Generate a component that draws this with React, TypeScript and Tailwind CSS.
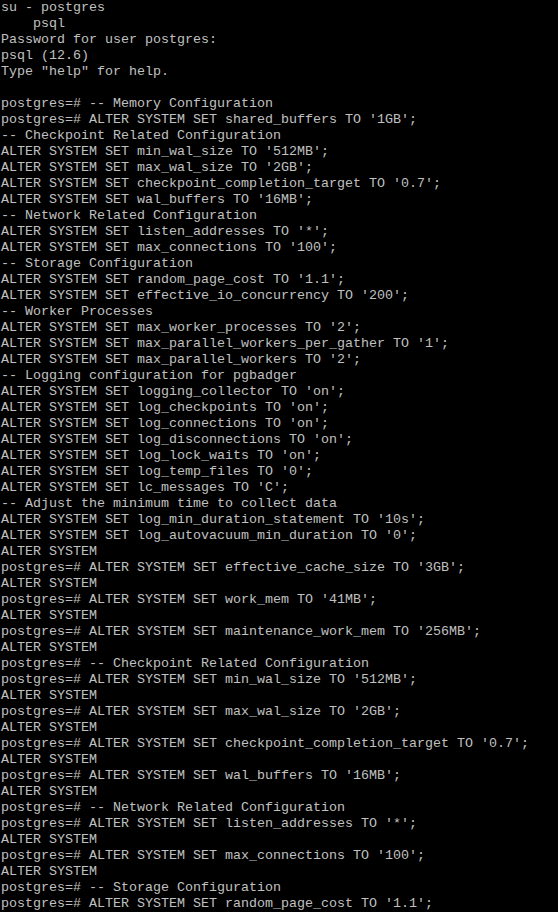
const lines = [
  "su - postgres",
  "    psql",
  "Password for user postgres:",
  "psql (12.6)",
  'Type "help" for help.',
  "",
  "postgres=# -- Memory Configuration",
  "postgres=# ALTER SYSTEM SET shared_buffers TO '1GB';",
  "-- Checkpoint Related Configuration",
  "ALTER SYSTEM SET min_wal_size TO '512MB';",
  "ALTER SYSTEM SET max_wal_size TO '2GB';",
  "ALTER SYSTEM SET checkpoint_completion_target TO '0.7';",
  "ALTER SYSTEM SET wal_buffers TO '16MB';",
  "-- Network Related Configuration",
  "ALTER SYSTEM SET listen_addresses TO '*';",
  "ALTER SYSTEM SET max_connections TO '100';",
  "-- Storage Configuration",
  "ALTER SYSTEM SET random_page_cost TO '1.1';",
  "ALTER SYSTEM SET effective_io_concurrency TO '200';",
  "-- Worker Processes",
  "ALTER SYSTEM SET max_worker_processes TO '2';",
  "ALTER SYSTEM SET max_parallel_workers_per_gather TO '1';",
  "ALTER SYSTEM SET max_parallel_workers TO '2';",
  "-- Logging configuration for pgbadger",
  "ALTER SYSTEM SET logging_collector TO 'on';",
  "ALTER SYSTEM SET log_checkpoints TO 'on';",
  "ALTER SYSTEM SET log_connections TO 'on';",
  "ALTER SYSTEM SET log_disconnections TO 'on';",
  "ALTER SYSTEM SET log_lock_waits TO 'on';",
  "ALTER SYSTEM SET log_temp_files TO '0';",
  "ALTER SYSTEM SET lc_messages TO 'C';",
  "-- Adjust the minimum time to collect data",
  "ALTER SYSTEM SET log_min_duration_statement TO '10s';",
  "ALTER SYSTEM SET log_autovacuum_min_duration TO '0';",
  "ALTER SYSTEM",
  "postgres=# ALTER SYSTEM SET effective_cache_size TO '3GB';",
  "ALTER SYSTEM",
  "postgres=# ALTER SYSTEM SET work_mem TO '41MB';",
  "ALTER SYSTEM",
  "postgres=# ALTER SYSTEM SET maintenance_work_mem TO '256MB';",
  "ALTER SYSTEM",
  "postgres=# -- Checkpoint Related Configuration",
  "postgres=# ALTER SYSTEM SET min_wal_size TO '512MB';",
  "ALTER SYSTEM",
  "postgres=# ALTER SYSTEM SET max_wal_size TO '2GB';",
  "ALTER SYSTEM",
  "postgres=# ALTER SYSTEM SET checkpoint_completion_target TO '0.7';",
  "ALTER SYSTEM",
  "postgres=# ALTER SYSTEM SET wal_buffers TO '16MB';",
  "ALTER SYSTEM",
  "postgres=# -- Network Related Configuration",
  "postgres=# ALTER SYSTEM SET listen_addresses TO '*';",
  "ALTER SYSTEM",
  "postgres=# ALTER SYSTEM SET max_connections TO '100';",
  "ALTER SYSTEM",
  "postgres=# -- Storage Configuration",
  "postgres=# ALTER SYSTEM SET random_page_cost TO '1.1';",
];

export default function App() {
  return (
    <div className="w-[558px] h-[912px] overflow-hidden bg-black">
      <div className="pl-[1px] font-['Liberation_Mono','Courier_New',monospace] text-[13.33px] leading-[16px] text-[#c0c0c0] whitespace-pre">
        {lines.map((l, i) => (
          <div key={i} className="h-[16px]">
            {l}
          </div>
        ))}
      </div>
    </div>
  );
}
